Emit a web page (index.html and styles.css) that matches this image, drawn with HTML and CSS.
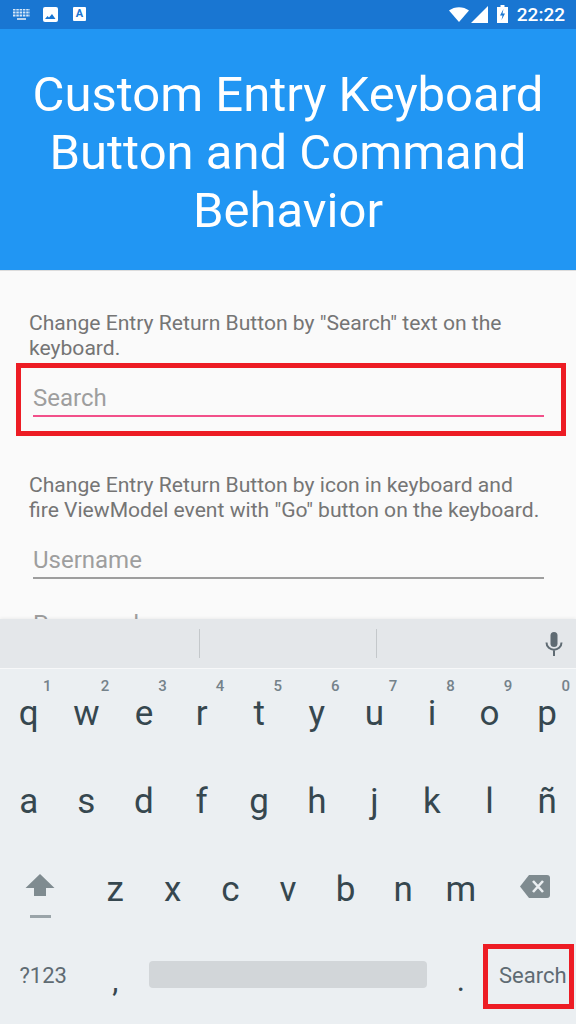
FILE: index.html
```html
<!DOCTYPE html>
<html lang="en">
<head>
    <meta charset="UTF-8">
    <title>Custom Entry Keyboard Button and Command Behavior</title>
    <link rel="stylesheet" href="styles.css">
</head>
<body>
    <div class="screen">
        <div class="status-bar">
            <div class="status-left">
                <svg class="icon-kbd" width="17" height="11" viewBox="0 0 17 11">
                    <path d="M0 0.500H17M0 3.500H17M0 6.500H17" stroke="#d5e6f8" stroke-width="2" stroke-dasharray="2.500 .8"/>
                    <rect x="4" y="9" width="9" height="2" fill="#b9d3ee"/>
                </svg>
                <svg class="icon-pic" width="15" height="15" viewBox="0 0 15 15">
                    <rect width="15" height="15" rx="2" fill="#fff"/>
                    <path d="M2 12l2.500-3 1.500 1.500 3-3.500 3.500 5z" fill="#1976d2"/>
                </svg>
                <div class="icon-a">A</div>
            </div>
            <div class="status-right">
                <svg width="20" height="15" viewBox="0 0 20 15"><path d="M0 3.500C5.500-1 14.500-1 20 3.500L10 15z" fill="#fff"/></svg>
                <svg width="17" height="17" viewBox="0 0 17 17"><path d="M17 0V17H0z" fill="#fff"/></svg>
                <svg class="icon-batt" width="11" height="18" viewBox="0 0 11 18">
                    <path d="M3.500 0h4v2H11v16H0V2h3.500z" fill="#fff"/>
                    <path d="M6.500 4L3 10.500h2.500L4.500 15 8 8.500H5.500z" fill="#1976d2"/>
                </svg>
                <span class="clock">22:22</span>
            </div>
        </div>

        <header class="title-bar">
            <h1>Custom Entry Keyboard Button and Command Behavior</h1>
        </header>

        <main class="content">
            <p class="hint">Change Entry Return Button by "Search" text on the keyboard.</p>
            <div class="entry entry-focus">Search</div>
            <p class="hint hint-second">Change Entry Return Button by icon in keyboard and fire ViewModel event with "Go" button on the keyboard.</p>
            <div class="entry">Username</div>
            <div class="entry entry-next">Password</div>
            <div class="mark mark-entry"></div>
        </main>

        <section class="keyboard">
            <div class="suggest">
                <div class="suggest-cell"></div>
                <div class="suggest-cell suggest-line"></div>
                <div class="suggest-cell suggest-line">
                    <svg class="mic" width="18" height="24" viewBox="0 0 18 24">
                        <rect x="5.500" y="0" width="7" height="15" rx="3.500" fill="#5f6b73"/>
                        <path d="M1.500 10.500C1.500 20 16.500 20 16.500 10.500M9 18v6" fill="none" stroke="#5f6b73" stroke-width="2"/>
                    </svg>
                </div>
            </div>
            <div class="key-row">
                <div class="key"><sup class="num">1</sup>q</div>
                <div class="key"><sup class="num">2</sup>w</div>
                <div class="key"><sup class="num">3</sup>e</div>
                <div class="key"><sup class="num">4</sup>r</div>
                <div class="key"><sup class="num">5</sup>t</div>
                <div class="key"><sup class="num">6</sup>y</div>
                <div class="key"><sup class="num">7</sup>u</div>
                <div class="key"><sup class="num">8</sup>i</div>
                <div class="key"><sup class="num">9</sup>o</div>
                <div class="key"><sup class="num">0</sup>p</div>
            </div>
            <div class="key-row">
                <div class="key">a</div>
                <div class="key">s</div>
                <div class="key">d</div>
                <div class="key">f</div>
                <div class="key">g</div>
                <div class="key">h</div>
                <div class="key">j</div>
                <div class="key">k</div>
                <div class="key">l</div>
                <div class="key">ñ</div>
            </div>
            <div class="key-row">
                <div class="key key-wide key-shift">
                    <svg width="30" height="46" viewBox="0 0 30 46">
                        <path d="M15 0L29.500 14H21V22H9V14H0.500z" fill="#7f8b90"/>
                        <rect x="5" y="41" width="21" height="3" fill="#9aa4a9"/>
                    </svg>
                </div>
                <div class="key">z</div>
                <div class="key">x</div>
                <div class="key">c</div>
                <div class="key">v</div>
                <div class="key">b</div>
                <div class="key">n</div>
                <div class="key">m</div>
                <div class="key key-wide key-back">
                    <svg width="30" height="23" viewBox="0 0 30 23">
                        <path d="M9 0H27a3 3 0 0 1 3 3V20a3 3 0 0 1-3 3H9L0 11.500z" fill="#7f8b90"/>
                        <path d="M13 6l10 11M23 6L13 17" stroke="#ebeff2" stroke-width="2.600"/>
                    </svg>
                </div>
            </div>
            <div class="key-row key-row-last">
                <div class="key key-wide key-label">?123</div>
                <div class="key key-punct">,</div>
                <div class="key key-space"><div class="space-bar"></div></div>
                <div class="key key-punct">.</div>
                <div class="key key-wide key-label">Search</div>
            </div>
            <div class="mark mark-key"></div>
        </section>
    </div>
</body>
</html>
```

FILE: styles.css
```css
* {
    box-sizing: border-box;
}
body {
    margin: 0;
    font-family: Roboto, "Liberation Sans", sans-serif;
}
.screen {
    position: relative;
    width: 576px;
    height: 1024px;
    display: flex;
    flex-direction: column;
    overflow: hidden;
    background-color: #fafafa;
}

/* status bar */
.status-bar {
    height: 29px;
    flex: none;
    display: flex;
    justify-content: space-between;
    align-items: center;
    padding: 0 11px 1px 13px;
    background-color: #1976d2;
    color: #fff;
}
.status-left, .status-right {
    display: flex;
    align-items: center;
}
.icon-kbd {
    margin-right: 13px;
}
.icon-pic {
    margin-right: 15px;
}
.icon-a {
    width: 13px;
    height: 14px;
    border-radius: 1px;
    background-color: #fff;
    color: #1976d2;
    font-size: 11px;
    font-weight: 700;
    line-height: 13px;
    text-align: center;
}
.status-right svg {
    margin-right: 2px;
}
.status-right .icon-batt {
    margin-left: 7px;
    margin-right: 9px;
}
.clock {
    font-size: 19px;
    font-weight: 500;
}

/* title */
.title-bar {
    height: 242px;
    flex: none;
    padding: 37px 16px 0;
    background-color: #2196f3;
    border-bottom: 1px solid #dcdcdc;
}
h1 {
    margin: 0;
    color: #fff;
    font-size: 49px;
    font-weight: 400;
    line-height: 58px;
    text-align: center;
}

/* form */
.content {
    position: relative;
    flex: 1;
    min-height: 0;
    overflow: hidden;
    padding: 39px 32px 0 33px;
}
.hint {
    margin: 0 0 0 -4px;
    color: #757575;
    font-size: 21.1px;
    line-height: 25px;
}
.hint-second {
    margin-top: 55px;
}
.entry {
    height: 57px;
    padding-top: 22px;
    border-bottom: 2px solid #9e9e9e;
    color: #9e9e9e;
    font-size: 24px;
    line-height: 32px;
}
.entry-focus {
    border-bottom-color: #f2508a;
}
.entry-next {
    margin-top: 7px;
    border: none;
}
.mark {
    position: absolute;
    border: 5px solid #ed1c24;
}
.mark-entry {
    left: 16px;
    top: 92px;
    width: 550px;
    height: 73px;
}

/* keyboard */
.keyboard {
    position: relative;
    height: 405px;
    flex: none;
    background-color: #ebeff2;
    color: #36474f;
    box-shadow: 0 -1px 3px rgba(0, 0, 0, 0.06);
}
.suggest {
    height: 50px;
    display: flex;
    align-items: center;
    background-color: #e4e7ea;
    border-bottom: 1px solid #f7f8f9;
}
.suggest-cell {
    position: relative;
    width: 177px;
    height: 29px;
    display: flex;
    justify-content: center;
    align-items: center;
}
.suggest-cell:first-child {
    width: 199px;
}
.suggest-line {
    border-left: 1px solid #c4c8cb;
}
.suggest-cell:last-child {
    width: 200px;
    justify-content: flex-end;
    padding-right: 13px;
}
.key-row {
    height: 88px;
    display: flex;
}
.key-row-last {
    height: 91px;
}
.key {
    position: relative;
    width: 57.6px;
    display: flex;
    justify-content: center;
    align-items: center;
    font-size: 35px;
}
.key-wide {
    width: 86.4px;
}
.key-shift {
    padding: 15px 7px 0 0;
}
.key-back {
    padding: 0 0 6px 5px;
}
.num {
    position: absolute;
    top: 8px;
    right: 6px;
    color: #75828a;
    font-size: 15px;
    font-weight: 500;
    line-height: 18px;
}
.key-label {
    padding-bottom: 6px;
    color: #5f6b73;
    font-size: 22px;
}
.key-punct {
    padding-top: 4px;
    font-size: 31px;
}
.key-space {
    width: 288px;
    padding: 0 5px 8px;
}
.space-bar {
    width: 100%;
    height: 27px;
    border-radius: 4px;
    background-color: #d2d6d9;
}
.mark-key {
    left: 483px;
    top: 325px;
    width: 91px;
    height: 65px;
}
```
